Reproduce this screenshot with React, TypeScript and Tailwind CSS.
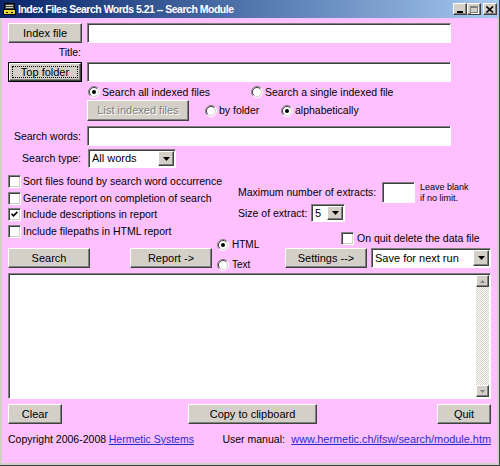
import React from "react";

const raised =
  "bg-[#d4d0c8] border border-t-white border-l-white border-r-[#404040] border-b-[#404040] shadow-[inset_-1px_-1px_0_#808080]";
const sunken =
  "bg-white border border-t-[#808080] border-l-[#808080] border-r-white border-b-white shadow-[inset_1px_1px_0_#404040]";

function Btn({
  className = "",
  children,
  disabled,
}: {
  className?: string;
  children: React.ReactNode;
  disabled?: boolean;
}) {
  return (
    <div
      className={`${raised} shrink-0 flex items-center justify-center text-[11px] leading-none ${
        disabled ? "text-[#808080] [text-shadow:1px_1px_0_#fff]" : "text-black"
      } ${className}`}
    >
      {children}
    </div>
  );
}

function FocusBtn({ className = "", children }: { className?: string; children: React.ReactNode }) {
  return (
    <div className={`shrink-0 border border-black ${className}`}>
      <div className={`${raised} w-full h-full flex items-center justify-center p-[2px]`}>
        <div className="w-full h-full flex items-center justify-center outline outline-1 outline-dotted outline-black -outline-offset-1 text-[11px] leading-none">
          {children}
        </div>
      </div>
    </div>
  );
}

function Radio({ checked }: { checked?: boolean }) {
  return (
    <svg width="12" height="12" viewBox="0 0 12 12" className="shrink-0">
      <circle cx="6" cy="6" r="5" fill="#fff" />
      <path d="M9.9 2.1 A5.5 5.5 0 0 0 2.1 9.9" fill="none" stroke="#808080" />
      <path d="M2.1 9.9 A5.5 5.5 0 0 0 9.9 2.1" fill="none" stroke="#fff" />
      <path d="M9.2 2.8 A4.5 4.5 0 0 0 2.8 9.2" fill="none" stroke="#404040" />
      <path d="M2.8 9.2 A4.5 4.5 0 0 0 9.2 2.8" fill="none" stroke="#d4d0c8" />
      {checked && <circle cx="6" cy="6" r="2" fill="#000" />}
    </svg>
  );
}

function Check({ checked }: { checked?: boolean }) {
  return (
    <div className="w-[13px] h-[13px] shrink-0 bg-white border border-t-[#808080] border-l-[#808080] border-r-white border-b-white shadow-[inset_1px_1px_0_#404040,inset_-1px_-1px_0_#d4d0c8] flex items-center justify-center">
      {checked && (
        <svg width="7" height="7" viewBox="0 0 7 7">
          <path d="M0.6 2.8 L2.5 4.8 L6.4 0.9" fill="none" stroke="#000" strokeWidth="1.7" />
        </svg>
      )}
    </div>
  );
}

function Select({ className = "", value }: { className?: string; value: string }) {
  return (
    <div className={`${sunken} shrink-0 flex items-stretch p-[1px] ${className}`}>
      <span className="flex-1 pl-[2px] flex items-center text-[11px] leading-none overflow-hidden whitespace-nowrap">
        {value}
      </span>
      <div className={`${raised} w-[16px] flex items-center justify-center`}>
        <svg width="7" height="4" viewBox="0 0 7 4">
          <path d="M0 0h7L3.5 4z" fill="#000" />
        </svg>
      </div>
    </div>
  );
}

function TitleIcon() {
  return (
    <svg width="13" height="12" viewBox="0 0 13 12" className="shrink-0">
      <rect x="1.5" y="0.5" width="10" height="6" fill="#404040" stroke="#000" />
      <path d="M3 2.5h7M3 4.5h7" stroke="#d4d0c8" />
      <rect x="0.5" y="6.5" width="12" height="5" fill="#e8d830" stroke="#000" />
      <path d="M3 9.5h2M8 9.5h2" stroke="#000" />
    </svg>
  );
}

function WinCtl({ children, className = "" }: { children: React.ReactNode; className?: string }) {
  return (
    <div className={`${raised} w-[14px] h-[12px] flex items-center justify-center ${className}`}>{children}</div>
  );
}

export default function App() {
  return (
    <div className="w-[500px] h-[466px] bg-[#d4d0c8] flex flex-col font-['Liberation_Sans',Arial,sans-serif] text-[10.5px] text-black border-r border-b border-[#404040] overflow-hidden">
      {/* Title bar */}
      <div className="h-[18px] shrink-0 flex items-center bg-linear-to-r from-[#0a246a] to-[#a6caf0] pl-[3px] pr-[2px]">
        <TitleIcon />
        <span className="ml-[2px] text-white font-bold text-[10.5px] tracking-[-0.5px] leading-none whitespace-nowrap">
          Index Files Search Words 5.21 -- Search Module
        </span>
        <div className="ml-auto flex items-center">
          <WinCtl>
            <div className="w-[6px] h-[2px] bg-black mt-[5px]" />
          </WinCtl>
          <WinCtl>
            <div className="w-[8px] h-[7px] border border-[#808080] border-t-2 shadow-[1px_1px_0_#fff]" />
          </WinCtl>
          <WinCtl className="ml-[2px]">
            <svg width="8" height="7" viewBox="0 0 8 7">
              <path d="M0.5 0.5 L7 6.5 M7 0.5 L0.5 6.5" stroke="#000" strokeWidth="1.6" />
            </svg>
          </WinCtl>
        </div>
      </div>

      {/* Body */}
      <div className="flex-1 mx-[2px] mb-[2px] bg-[#ffc0ff] pl-[6px] pr-[6px] pt-[5px] flex flex-col">
        {/* Index file */}
        <div className="flex items-center h-[20px]">
          <Btn className="w-[74px] h-[20px]">Index file</Btn>
          <div className={`${sunken} ml-[5px] w-[364px] h-[20px]`} />
        </div>
        {/* Title */}
        <div className="flex items-center h-[19px]">
          <span className="w-[73px] text-right leading-none">Title:</span>
        </div>
        {/* Top folder */}
        <div className="flex items-center h-[20px]">
          <FocusBtn className="w-[74px] h-[20px]">Top folder</FocusBtn>
          <div className={`${sunken} ml-[5px] w-[364px] h-[20px]`} />
        </div>
        {/* Radios */}
        <div className="flex items-center h-[16px] mt-[2px] pl-[80px]">
          <div className="w-[163px] flex items-center gap-[2px]">
            <Radio checked />
            <span className="leading-none">Search all indexed files</span>
          </div>
          <div className="flex items-center gap-[2px]">
            <Radio />
            <span className="leading-none">Search a single indexed file</span>
          </div>
        </div>
        {/* List indexed files */}
        <div className="flex items-center h-[21px] pl-[79px]">
          <Btn className="w-[102px] h-[21px]" disabled>
            List indexed files
          </Btn>
          <div className="ml-[16px] w-[76px] flex items-center gap-[2px]">
            <Radio />
            <span className="leading-none">by folder</span>
          </div>
          <div className="flex items-center gap-[2px]">
            <Radio checked />
            <span className="leading-none">alphabetically</span>
          </div>
        </div>
        {/* Search words */}
        <div className="flex items-center h-[20px] mt-[5px]">
          <span className="w-[73px] text-right leading-none">Search words:</span>
          <div className={`${sunken} ml-[6px] w-[364px] h-[20px]`} />
        </div>
        {/* Search type */}
        <div className="flex items-center h-[19px] mt-[3px]">
          <span className="w-[73px] text-right leading-none">Search type:</span>
          <Select className="ml-[7px] w-[88px] h-[19px]" value="All words" />
        </div>
        {/* Options block */}
        <div className="flex mt-[5px] h-[71px]">
          <div className="w-[230px] flex flex-col">
            <div className="h-[17px] flex items-center gap-[2px]">
              <Check />
              <span className="leading-none">Sort files found by search word occurrence</span>
            </div>
            <div className="h-[16px] flex items-center gap-[2px]">
              <Check />
              <span className="leading-none">Generate report on completion of search</span>
            </div>
            <div className="h-[17px] flex items-center gap-[2px]">
              <Check checked />
              <span className="leading-none">Include descriptions in report</span>
            </div>
            <div className="h-[16px] flex items-center gap-[2px]">
              <Check />
              <span className="leading-none">Include filepaths in HTML report</span>
            </div>
          </div>
          <div className="flex flex-col pt-[9px]">
            <div className="h-[21px] flex items-center">
              <span className="w-[138px] leading-none whitespace-nowrap">Maximum number of extracts:</span>
              <div className={`${sunken} ml-[6px] w-[33px] h-[21px]`} />
              <div className="ml-[5px] text-[9px] leading-[11px] whitespace-nowrap">
                <div>Leave blank</div>
                <div>if no limit.</div>
              </div>
            </div>
            <div className="h-[18px] mt-[1px] flex items-center">
              <span className="w-[70px] leading-none whitespace-nowrap">Size of extract:</span>
              <Select className="ml-[3px] w-[34px] h-[18px]" value="5" />
            </div>
            <div className="h-[12px] mt-[10px] pl-[103px] flex items-center gap-[3px]">
              <Check />
              <span className="leading-none whitespace-nowrap">On quit delete the data file</span>
            </div>
          </div>
        </div>
        {/* Action buttons */}
        <div className="flex items-center h-[20px] mt-[4px]">
          <Btn className="w-[82px] h-[20px]">Search</Btn>
          <Btn className="ml-[40px] w-[82px] h-[20px]">Report -&gt;</Btn>
          <div className="ml-[5px] w-[68px] self-start flex flex-col h-[40px] -mt-[13px] -mb-[7px]">
            <div className="h-[20px] flex items-center gap-[3px]">
              <Radio checked />
              <span className="text-[10px] leading-none">HTML</span>
            </div>
            <div className="h-[20px] flex items-center gap-[3px]">
              <Radio />
              <span className="text-[10px] leading-none">Text</span>
            </div>
          </div>
          <Btn className="w-[82px] h-[20px]">Settings --&gt;</Btn>
          <Select className="ml-[4px] w-[120px] h-[20px]" value="Save for next run" />
        </div>
        {/* Text area */}
        <div className={`${sunken} mt-[5px] h-[126px] w-full flex justify-end p-[1px]`}>
          <div className="w-[13px] h-full flex flex-col bg-[repeating-conic-gradient(#d4d0c8_0_25%,#fff_0_50%)] bg-[length:2px_2px]">
            <div className={`${raised} h-[12px] flex items-center justify-center`}>
              <svg width="5" height="3" viewBox="0 0 5 3">
                <path d="M0 3h5L2.5 0z" fill="#808080" />
              </svg>
            </div>
            <div className="flex-1" />
            <div className={`${raised} h-[12px] flex items-center justify-center`}>
              <svg width="5" height="3" viewBox="0 0 5 3">
                <path d="M0 0h5L2.5 3z" fill="#808080" />
              </svg>
            </div>
          </div>
        </div>
        {/* Bottom buttons */}
        <div className="flex items-center h-[20px] mt-[5px]">
          <Btn className="w-[54px] h-[20px]">Clear</Btn>
          <Btn className="ml-[126px] w-[129px] h-[20px]">Copy to clipboard</Btn>
          <Btn className="ml-auto w-[54px] h-[20px]">Quit</Btn>
        </div>
        {/* Footer */}
        <div className="flex items-center h-[16px] mt-[7px] whitespace-nowrap">
          <span className="w-[101px] leading-none">Copyright 2006-2008</span>
          <span className="w-[114px] leading-none text-[#2a2ad0] underline">Hermetic Systems</span>
          <span className="w-[69px] leading-none">User manual:</span>
          <span className="leading-none text-[10.9px] text-[#2a2ad0] underline">www.hermetic.ch/ifsw/search/module.htm</span>
        </div>
      </div>
    </div>
  );
}
